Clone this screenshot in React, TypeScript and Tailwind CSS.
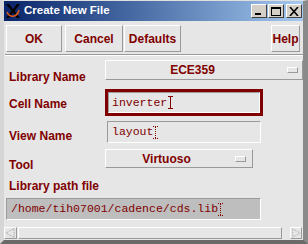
import React from 'react';

const raised = 'border border-t-white border-l-white border-r-[#9a9a9a] border-b-[#9a9a9a]';
const sunken = 'border border-t-[#9a9a9a] border-l-[#9a9a9a] border-r-white border-b-white';
const label = 'text-[12px] font-bold text-[#800000] leading-[14px] whitespace-nowrap';
const mono = { fontFamily: '"Liberation Mono", "DejaVu Sans Mono", monospace' };

function XLogo() {
  return (
    <svg width="16" height="16" viewBox="0 0 16 16">
      <polygon points="1,1 4,1 15,15 12,15" fill="#000" />
      <polygon points="12,1 15,1 4,15 1,15" fill="#000" />
      <path d="M2 9 Q4 14 9 13 Q13 12 14 7" stroke="#e05a1a" strokeWidth="1.5" fill="none" />
    </svg>
  );
}

function TitleButton({ children }: { children: React.ReactNode }) {
  return (
    <div className="w-[16px] h-[14px] bg-[#d4d0c8] border border-t-white border-l-white border-r-[#404040] border-b-[#404040] flex items-center justify-center">
      {children}
    </div>
  );
}

function Button({ text, w }: { text: string; w: string }) {
  return (
    <div className={`${w} h-[27px] ${raised} flex items-center justify-center text-[12px] font-bold text-[#800000]`}>
      {text}
    </div>
  );
}

function Indicator() {
  return <div className={`w-[11px] h-[6px] ${raised} bg-[#e6e6e6]`} />;
}

function Caret() {
  return (
    <span className="inline-flex flex-col items-center w-[5px] h-[13px] align-middle ml-[1px]">
      <span className="w-[5px] h-[1px] bg-[#800000]" />
      <span className="w-[1px] flex-1 bg-[#800000]" />
      <span className="w-[5px] h-[1px] bg-[#800000]" />
    </span>
  );
}

function DotCaret() {
  return (
    <span className="inline-flex flex-col items-center w-[5px] h-[13px] align-middle">
      <span className="w-[5px] h-0 border-t border-dotted border-[#800000]" />
      <span className="w-0 flex-1 border-l border-dotted border-[#800000]" />
      <span className="w-[5px] h-0 border-t border-dotted border-[#800000]" />
    </span>
  );
}

function Arrow({ left }: { left?: boolean }) {
  return (
    <svg width="12" height="12" viewBox="0 0 12 12">
      {left ? (
        <polygon points="10,1 10,11 1,6" fill="none" stroke="#9a9a9a" strokeDasharray="1 1" />
      ) : (
        <polygon points="2,1 2,11 11,6" fill="none" stroke="#9a9a9a" strokeDasharray="1 1" />
      )}
    </svg>
  );
}

export default function App() {
  return (
    <div
      className="w-[308px] h-[244px] bg-[#d6d6d6] border-t border-r-[5px] border-b-4 border-l-4 border-t-[#e0e0e0] border-l-[#d6d6d6] border-r-[#8a8a8a] border-b-[#6a6a6a] flex flex-col overflow-hidden"
      style={{ fontFamily: '"Liberation Sans", Arial, sans-serif' }}
    >
      {/* title bar */}
      <div className="h-[20px] shrink-0 bg-gradient-to-r from-[#0a246a] to-[#a6caf0] flex items-center pl-[1px] pr-[1px]">
        <XLogo />
        <span className="ml-[3px] text-white font-bold text-[11.5px]">Create New File</span>
        <div className="ml-auto flex items-center gap-[1px]">
          <TitleButton>
            <span className="w-[6px] h-[2px] bg-black mt-[6px] -ml-[2px]" />
          </TitleButton>
          <TitleButton>
            <span className="w-[10px] h-[9px] border border-black border-t-2" />
          </TitleButton>
          <div className="ml-[1px]">
            <TitleButton>
              <svg width="10" height="9" viewBox="0 0 10 9">
                <path d="M1 0 L9 9 M9 0 L1 9" stroke="#000" strokeWidth="1.6" />
              </svg>
            </TitleButton>
          </div>
        </div>
      </div>

      <div className="flex-1 bg-[#e6e6e6] flex flex-col">
        {/* button row */}
        <div className="mt-[4px] flex items-center pl-[2px] pr-[3px]">
          <Button text="OK" w="w-[56px]" />
          <div className="ml-[3px]">
            <Button text="Cancel" w="w-[58px]" />
          </div>
          <div className="ml-[1px]">
            <Button text="Defaults" w="w-[57px]" />
          </div>
          <div className="ml-auto">
            <Button text="Help" w="w-[29px]" />
          </div>
        </div>

        <div className="mt-[2px] h-[2px] border-t border-t-[#9a9a9a] border-b border-b-white ml-[1px]" />

        {/* Library Name */}
        <div className="mt-[4px] h-[20px] flex items-start">
          <div className={`${label} w-[101px] pl-[5px] pt-[10px]`}>Library Name</div>
          <div className={`w-[198px] h-[20px] ${raised} flex items-center pr-[4px]`}>
            <span className="flex-1 text-center text-[12px] font-bold text-[#800000] pr-[8px]">ECE359</span>
            <Indicator />
          </div>
        </div>

        {/* Cell Name */}
        <div className="mt-[9px] h-[27px] flex items-start">
          <div className={`${label} w-[101px] pl-[5px] pt-[8px]`}>Cell Name</div>
          <div className="w-[158px] h-[27px] border-[3px] border-[#800000]">
            <div className={`h-full ${sunken} flex items-center pl-[3px] text-[11.5px] text-[#800000]`} style={mono}>
              <span>inverter</span>
              <Caret />
            </div>
          </div>
        </div>

        {/* View Name */}
        <div className="mt-[5px] h-[22px] flex items-start">
          <div className={`${label} w-[103px] pl-[5px] pt-[8px]`}>View Name</div>
          <div className={`w-[154px] h-[22px] ${sunken} flex items-center pl-[4px] text-[11.5px] text-[#800000]`} style={mono}>
            <span>layout</span>
            <DotCaret />
          </div>
        </div>

        {/* Tool */}
        <div className="mt-[6px] h-[19px] flex items-start">
          <div className={`${label} w-[101px] pl-[5px] pt-[9px]`}>Tool</div>
          <div className={`w-[148px] h-[19px] ${raised} flex items-center pr-[6px]`}>
            <span className="flex-1 text-center text-[12px] font-bold text-[#800000] pr-[8px]">Virtuoso</span>
            <Indicator />
          </div>
        </div>

        {/* Library path file */}
        <div className={`${label} mt-[11px] pl-[5px]`}>Library path file</div>
        <div className="mt-[5px] pl-[2px]">
          <div className={`w-[255px] h-[22px] bg-[#bebebe] ${sunken} flex items-center pl-[4px] text-[11.5px] text-[#800000]`} style={mono}>
            <span>/home/tih07001/cadence/cds.lib</span>
            <DotCaret />
          </div>
        </div>

        {/* scrollbar */}
        <div className="mt-[7px] h-[12px] flex items-center pr-[1px]">
          <div className={`w-[13px] h-[12px] ${raised} flex items-center justify-center`}>
            <Arrow left />
          </div>
          <div className={`ml-[1px] w-[264px] h-[12px] ${raised}`} />
          <div className={`ml-auto w-[12px] h-[12px] ${raised} flex items-center justify-center`}>
            <Arrow />
          </div>
        </div>
      </div>
    </div>
  );
}
